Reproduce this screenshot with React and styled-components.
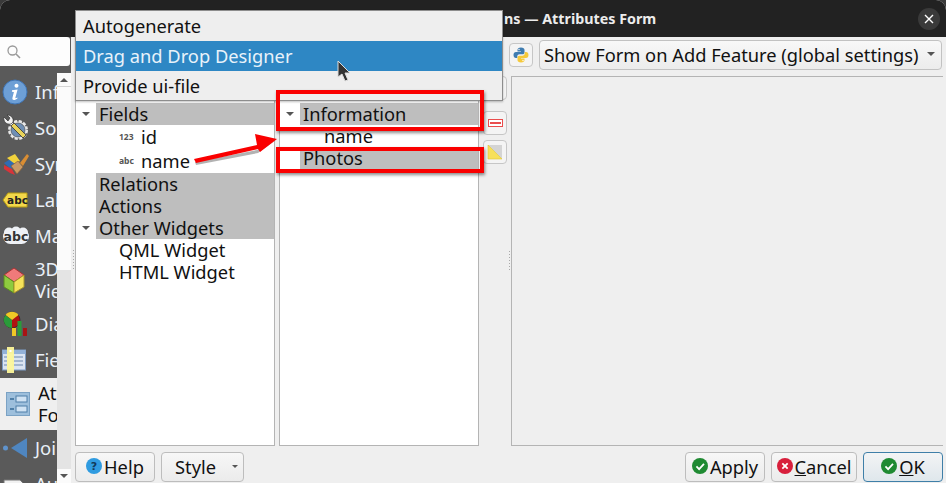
import React from 'react'
import styled, { createGlobalStyle } from 'styled-components'

const GlobalStyle = createGlobalStyle`
  html, body { margin: 0; padding: 0; background: #3a3a3a; }
  body { font-family: "Noto Sans", "DejaVu Sans", sans-serif; }
  * { box-sizing: border-box; }
`

const navItems = [
  { label: 'Information', icon: 'info' },
  { label: 'Source', icon: 'source' },
  { label: 'Symbology', icon: 'symbology' },
  { label: 'Labels', icon: 'labels' },
  { label: 'Masks', icon: 'masks' },
  { label: '3D\nView', icon: 'cube', tall: true },
  { label: 'Diagrams', icon: 'diagrams' },
  { label: 'Fields', icon: 'fields' },
  { label: 'Attributes\nForm', icon: 'form', tall: true, active: true },
  { label: 'Joins', icon: 'joins' },
  { label: 'Auxiliary', icon: 'aux' },
]

function NavIcon({ name }) {
  switch (name) {
    case 'info':
      return (
        <svg width="26" height="26" viewBox="0 0 26 26">
          <circle cx="13" cy="13" r="12" fill="#6d9fd6" stroke="#3f74b4" />
          <path d="M14.5 4.8a2 2 0 1 1-.01 0zM10 11.2l5.6-.6-2.2 8c-.2.8.5.9 1.9-.2l.3.8c-2 2-5.700 2.800-5.200-.2l1.500-6-2-.2z" fill="#fff" />
        </svg>
      )
    case 'source':
      return (
        <svg width="28" height="28" viewBox="0 0 28 28">
          <circle cx="16" cy="16" r="8.500" fill="#d5d9dc" stroke="#e8e8e8" strokeDasharray="3 1.500" strokeWidth="3" />
          <circle cx="16" cy="16" r="7" fill="#6f8fb5" stroke="#444" strokeWidth=".6" />
          <path d="M12 9l12 12-3 3L9 12z" fill="#e8d25a" stroke="#333" strokeWidth=".8" />
          <path d="M2 3c-1 4 2 8 7 7l2-2C12 4 9 1 5 1l3 3-2 3z" fill="#f2f2f2" stroke="#333" strokeWidth=".7" />
        </svg>
      )
    case 'symbology':
      return (
        <svg width="28" height="26" viewBox="0 0 28 26">
          <path d="M2 12l10-6 5 6-8 6z" fill="#2f6cb5" />
          <path d="M5 7l8-4 5 7-5 3z" fill="#f1d23c" />
          <path d="M2 14l8 4 3 6-5-2-6-4z" fill="#d8343a" />
          <path d="M9 15l7-5 5 6-6 7z" fill="#c99a66" stroke="#8a6236" strokeWidth=".7" />
          <path d="M18 12l7-9 2 2-6 10z" fill="#d98d33" />
        </svg>
      )
    case 'labels':
      return (
        <svg width="26" height="16" viewBox="0 0 26 16">
          <path d="M6 1h19v14H6L1 8z" fill="#f3d84a" stroke="#b59a12" />
          <text x="15.500" y="11.500" textAnchor="middle" fontSize="10.500" fontWeight="700" fill="#222" fontFamily="DejaVu Sans">abc</text>
        </svg>
      )
    case 'masks':
      return (
        <svg width="28" height="20" viewBox="0 0 28 20">
          <circle cx="7" cy="6.500" r="5" fill="#eef1f6" />
          <circle cx="14" cy="5.500" r="5" fill="#eef1f6" />
          <circle cx="21" cy="6.500" r="5" fill="#eef1f6" />
          <rect x="1" y="3" width="26" height="15" rx="7.500" fill="#eef1f6" />
          <text x="14" y="14.500" textAnchor="middle" fontSize="12.500" fontWeight="700" fill="#333" fontFamily="DejaVu Sans">abc</text>
        </svg>
      )
    case 'cube':
      return (
        <svg width="24" height="27" viewBox="0 0 24 27">
          <path d="M12 1l10 7-10 7L2 8z" fill="#f07a7a" stroke="#a33" />
          <path d="M2 8l10 7v11L2 20z" fill="#8ecb3f" stroke="#5c8a1e" />
          <path d="M22 8l-10 7v11l10-6z" fill="#f5e25a" stroke="#a8942a" />
        </svg>
      )
    case 'diagrams':
      return (
        <svg width="25" height="26" viewBox="0 0 25 26">
          <circle cx="10" cy="9" r="8" fill="#b01212" stroke="#222" strokeWidth=".6" />
          <path d="M10 9L3.500 4A8 8 0 0 1 16.500 4z" fill="#f0c826" />
          <path d="M10 9L3.500 4A8 8 0 0 0 10 17z" fill="#2a9b3a" />
          <rect x="10" y="17" width="4" height="8" fill="#f0c826" />
          <rect x="15.500" y="10" width="4" height="15" fill="#2a9b3a" />
          <rect x="21" y="17" width="4" height="8" fill="#a81414" />
        </svg>
      )
    case 'fields':
      return (
        <svg width="24" height="26" viewBox="0 0 24 26">
          <rect x="0.500" y="3" width="23" height="20" fill="#dbe5f2" stroke="#7d9cc4" />
          <rect x="0.500" y="3" width="23" height="4" fill="#93b2d8" />
          <path d="M10 10h11M10 14h11M10 18h11M2 10h3M2 14h3M2 18h3" stroke="#6d89ad" />
          <rect x="5" y="0" width="7" height="26" fill="#fdf79a" opacity=".95" />
          <rect x="7.500" y="3" width="2" height="2" fill="#fff" />
        </svg>
      )
    case 'form':
      return (
        <svg width="24" height="24" viewBox="0 0 24 24">
          <rect x="0.500" y="0.500" width="23" height="23" fill="#9dbfdc" stroke="#7ba2c4" />
          <rect x="10" y="4" width="11" height="6" fill="#cfe2f3" stroke="#4f7fa8" />
          <rect x="10" y="14" width="11" height="6" fill="#cfe2f3" stroke="#4f7fa8" />
          <rect x="4" y="6" width="4" height="2" fill="#4f7fa8" />
          <rect x="4" y="16" width="4" height="2" fill="#4f7fa8" />
        </svg>
      )
    case 'joins':
      return (
        <svg width="26" height="22" viewBox="0 0 26 22">
          <circle cx="3.500" cy="11" r="2.500" fill="#5f93cc" />
          <path d="M9 11L25 1v20z" fill="#4f86c0" />
        </svg>
      )
    default:
      return (
        <svg width="24" height="20" viewBox="0 0 24 20">
          <path d="M2 6h16l4 4v10H2z" fill="#f2f2f2" stroke="#777" />
        </svg>
      )
  }
}

const CheckIcon = () => (
  <svg width="16" height="16" viewBox="0 0 18 18">
    <circle cx="9" cy="9" r="9" fill="#1f8a32" />
    <path d="M5 9.500l3 3 5.500-6" fill="none" stroke="#fff" strokeWidth="2" />
  </svg>
)

const CancelIcon = () => (
  <svg width="16" height="16" viewBox="0 0 18 18">
    <circle cx="9" cy="9" r="9" fill="#d81f3c" />
    <path d="M6 6l6 6M12 6l-6 6" stroke="#fff" strokeWidth="2" />
  </svg>
)

const HelpIcon = () => (
  <svg width="16" height="16" viewBox="0 0 18 18">
    <circle cx="9" cy="9" r="9" fill="#2f9be0" />
    <text x="9" y="13.500" textAnchor="middle" fontSize="12.500" fontWeight="700" fill="#123a5c" fontFamily="DejaVu Sans">?</text>
  </svg>
)

const PythonIcon = () => (
  <svg width="16" height="16" viewBox="0 0 16 16">
    <path d="M8 0.500C5.500.5 4.500 1.500 4.500 3v1.500H8V5H3C1.500 5 .5 6.200 .5 8s1 3 2.500 3h1.300V9.500c0-1.300 1-2.200 2.200-2.200h3.200c1 0 1.800-.8 1.800-1.800V3c0-1.500-1.200-2.500-3.500-2.500z" fill="#3f7cb0" />
    <path d="M8 15.500c2.500 0 3.500-1 3.500-2.500v-1.500H8V11h5c1.500 0 2.500-1.200 2.500-3S14.500 5 13 5h-1.300v1.500c0 1.300-1 2.200-2.200 2.200H6.300c-1 0-1.800.8-1.800 1.800V13c0 1.500 1.200 2.500 3.500 2.500z" fill="#f5c93a" />
    <circle cx="6" cy="2.500" r=".7" fill="#fff" />
    <circle cx="10" cy="13.500" r=".7" fill="#fff" />
  </svg>
)

const Page = styled.div`
  position: relative;
  width: 946px;
  height: 483px;
  overflow: hidden;
  display: flex;
  flex-direction: column;
  background: #efefef;
  border-radius: 10px 10px 0 0;
`

const TitleBar = styled.div`
  height: 37px;
  flex: none;
  background: #222222;
  display: flex;
  align-items: center;
  justify-content: space-between;
  padding: 0 6px 0 504px;
`

const Title = styled.div`
  color: #ececec;
  font-size: 14.300px;
  font-weight: 700;
  padding-bottom: 1px;
`

const CloseButton = styled.div`
  width: 22px;
  height: 22px;
  border-radius: 50%;
  background: #3a3a3a;
  display: flex;
  align-items: center;
  justify-content: center;
`

const Body = styled.div`
  flex: 1;
  min-height: 0;
  display: flex;
`

const Sidebar = styled.div`
  width: 71px;
  flex: none;
  background: #5a5a5a;
  display: flex;
  flex-direction: column;
`

const SearchBox = styled.div`
  width: 70px;
  height: 29px;
  flex: none;
  background: #fdfdfd;
  border-radius: 0 3px 3px 0;
  display: flex;
  align-items: center;
  padding-left: 7px;
`

const SidebarBody = styled.div`
  flex: 1;
  min-height: 0;
  display: flex;
  margin-top: 7px;
`

const NavList = styled.div`
  width: 57px;
  flex: none;
  overflow: hidden;
  padding-top: 1px;
`

const NavItem = styled.div`
  width: 57px;
  height: ${p => (p.$tall ? 52 : 36)}px;
  display: flex;
  align-items: center;
  background: ${p => (p.$active ? '#efefef' : 'transparent')};
  color: ${p => (p.$active ? '#111' : '#e9eff6')};
  font-size: 18.500px;
  line-height: 22px;
  white-space: pre;
`

const NavIconBox = styled.div`
  width: ${p => (p.$active ? 38 : 35)}px;
  flex: none;
  padding-left: ${p => (p.$active ? 6 : 2)}px;
  display: flex;
  align-items: center;
`

const ScrollBar = styled.div`
  width: 14px;
  flex: none;
  display: flex;
  flex-direction: column;
  background: #e4e4e4;
`

const ScrollStep = styled.div`
  height: ${p => p.$h}px;
  flex: none;
  display: flex;
  align-items: center;
  justify-content: center;
  background: #fbfbfb;
  border-bottom: ${p => (p.$line ? '1px solid #d5d5d5' : 'none')};
`

const ScrollTrack = styled.div`
  flex: 1;
`

const ArrowUp = styled.div`
  width: 0;
  height: 0;
  border-left: 4px solid transparent;
  border-right: 4px solid transparent;
  border-bottom: 4px solid #555;
`

const ArrowDown = styled.div`
  width: 0;
  height: 0;
  border-left: ${p => p.$s || 4}px solid transparent;
  border-right: ${p => p.$s || 4}px solid transparent;
  border-top: ${p => p.$s || 4}px solid ${p => p.$c || '#555'};
`

const Handle = styled.div`
  width: 4px;
  flex: none;
  display: flex;
  align-items: center;
  justify-content: center;
`

const Grip = styled.div`
  width: 1px;
  height: 20px;
  background: repeating-linear-gradient(#a9a9a9 0 1px, transparent 1px 3px);
`

const Main = styled.div`
  flex: 1;
  min-width: 0;
  display: flex;
  flex-direction: column;
  padding: 0 3px 1px 0;
`

const TopRow = styled.div`
  height: 39px;
  flex: none;
  display: flex;
  justify-content: flex-end;
  align-items: flex-start;
  padding: 3px 1px 0 0;
  gap: 6px;
`

const SmallButton = styled.div`
  width: 24px;
  height: 24px;
  flex: none;
  margin-top: ${p => p.$mt || 0}px;
  background: #f4f4f4;
  border: 1px solid #c6c6c6;
  border-radius: 4px;
  display: flex;
  align-items: center;
  justify-content: center;
`

const Combo = styled.div`
  width: 403px;
  height: 30px;
  background: linear-gradient(#f8f8f8, #ececec);
  border: 1px solid #c2c2c2;
  border-radius: 4px;
  display: flex;
  align-items: center;
  justify-content: space-between;
  padding: 0 6px 2px 4px;
  font-size: 18.300px;
  color: #111;
  white-space: nowrap;
`

const Content = styled.div`
  flex: 1;
  min-height: 0;
  display: flex;
`

const TreePanel = styled.div`
  width: 200px;
  flex: none;
  margin-right: 4px;
  background: #fff;
  border: 1px solid #b4b4b4;
  padding-top: 26px;
  font-size: 18.300px;
  color: #111;
`

const TreeRow = styled.div`
  height: ${p => p.$h || 22}px;
  display: flex;
  align-items: center;
  padding-left: ${p => p.$indent || 0}px;
  white-space: nowrap;
`

const TreeLeaf = styled(TreeRow)`
  padding-bottom: 2px;
`

const Expander = styled.div`
  width: 20px;
  flex: none;
  display: flex;
  justify-content: center;
  padding-right: 1px;
`

const GroupLabel = styled.div`
  flex: 1;
  height: 100%;
  display: flex;
  align-items: center;
  background: #bebebe;
  padding: 0 0 2px 3px;
`

const TypeTag = styled.span`
  width: 22px;
  flex: none;
  font-size: 8.500px;
  font-weight: 700;
  color: #555;
`

const ToolColumn = styled.div`
  width: 24px;
  flex: none;
  display: flex;
  flex-direction: column;
  gap: 5px;
`

const FormPreview = styled.div`
  flex: 1;
  border-top: 1px solid #b4b4b4;
  border-left: 1px solid #b4b4b4;
  border-bottom: 1px solid #b4b4b4;
`

const BottomRow = styled.div`
  height: 30px;
  flex: none;
  margin-top: 6px;
  display: flex;
  gap: 6px;
`

const DialogButton = styled.div`
  width: ${p => p.$w}px;
  flex: none;
  display: flex;
  align-items: center;
  justify-content: center;
  gap: 2px;
  padding-bottom: 2px;
  margin-left: ${p => (p.$push ? 'auto' : '0')};
  background: ${p => (p.$primary ? 'linear-gradient(#f3f4f5, #dfe7ec)' : 'linear-gradient(#f7f7f7, #ebebeb)')};
  border: 1px solid ${p => (p.$primary ? '#3f7fa8' : '#bdbdbd')};
  border-radius: 4px;
  font-size: 18.300px;
  color: #111;
`

const StyleButton = styled(DialogButton)`
  justify-content: flex-start;
  padding-left: 13px;
`

const StyleCaret = styled.span`
  margin-left: 14px;
  display: flex;
`

const Popup = styled.div`
  position: absolute;
  left: 75px;
  top: 10px;
  width: 428px;
  height: 91px;
  background: #eeeeee;
  border: 1px solid #8d8d8d;
  box-shadow: 0 1px 2px rgba(0, 0, 0, 0.25);
  font-size: 18.300px;
  color: #111;
`

const PopupItem = styled.div`
  height: 30px;
  display: flex;
  align-items: center;
  padding: 0 0 2px 7px;
  background: ${p => (p.$selected ? '#2e87c4' : 'transparent')};
  color: ${p => (p.$selected ? '#e8f2fa' : '#111')};
`

const RedBox = styled.div`
  position: absolute;
  left: 276px;
  top: ${p => p.$top}px;
  width: 208px;
  height: ${p => p.$h}px;
  border: 4px solid #fa0000;
  box-shadow: 1px 2px 3px rgba(0, 0, 0, 0.45);
`

const Overlay = styled.svg`
  position: absolute;
  left: 0;
  top: 0;
  pointer-events: none;
`

export default function App() {
  return (
    <>
      <GlobalStyle />
      <Page>
        <TitleBar>
          <Title>ns — Attributes Form</Title>
          <CloseButton>
            <svg width="10" height="10" viewBox="0 0 10 10">
              <path d="M1 1l8 8M9 1L1 9" stroke="#fff" strokeWidth="1.400" />
            </svg>
          </CloseButton>
        </TitleBar>
        <Body>
          <Sidebar>
            <SearchBox>
              <svg width="14" height="14" viewBox="0 0 14 14">
                <circle cx="5.500" cy="5.500" r="4.500" fill="none" stroke="#999" strokeWidth="1.300" />
                <path d="M9 9l4 4" stroke="#999" strokeWidth="1.600" />
              </svg>
            </SearchBox>
            <SidebarBody>
              <NavList>
                {navItems.map(item => (
                  <NavItem key={item.icon} $tall={item.tall} $active={item.active}>
                    <NavIconBox $active={item.active}>
                      <NavIcon name={item.icon} />
                    </NavIconBox>
                    <span>{item.label}</span>
                  </NavItem>
                ))}
              </NavList>
              <ScrollBar>
                <ScrollStep $h={14} $line><ArrowUp /></ScrollStep>
                <ScrollStep $h={183} />
                <ScrollTrack />
                <ScrollStep $h={14}><ArrowDown /></ScrollStep>
              </ScrollBar>
            </SidebarBody>
          </Sidebar>
          <Handle><Grip /></Handle>
          <Main>
            <TopRow>
              <SmallButton $mt={3}><PythonIcon /></SmallButton>
              <Combo>
                <span>Show Form on Add Feature (global settings)</span>
                <ArrowDown />
              </Combo>
            </TopRow>
            <Content>
              <TreePanel>
                <TreeRow>
                  <Expander><ArrowDown /></Expander>
                  <GroupLabel>Fields</GroupLabel>
                </TreeRow>
                <TreeLeaf $h={24} $indent={43}><TypeTag>123</TypeTag>id</TreeLeaf>
                <TreeLeaf $h={24} $indent={43}><TypeTag>abc</TypeTag>name</TreeLeaf>
                <TreeRow>
                  <Expander />
                  <GroupLabel>Relations</GroupLabel>
                </TreeRow>
                <TreeRow>
                  <Expander />
                  <GroupLabel>Actions</GroupLabel>
                </TreeRow>
                <TreeRow>
                  <Expander><ArrowDown /></Expander>
                  <GroupLabel>Other Widgets</GroupLabel>
                </TreeRow>
                <TreeLeaf $indent={43}>QML Widget</TreeLeaf>
                <TreeLeaf $indent={43}>HTML Widget</TreeLeaf>
              </TreePanel>
              <TreePanel>
                <TreeRow>
                  <Expander><ArrowDown /></Expander>
                  <GroupLabel>Information</GroupLabel>
                </TreeRow>
                <TreeLeaf $indent={44}>name</TreeLeaf>
                <TreeRow>
                  <Expander />
                  <GroupLabel>Photos</GroupLabel>
                </TreeRow>
              </TreePanel>
              <ToolColumn>
                <SmallButton>
                  <svg width="14" height="14" viewBox="0 0 14 14">
                    <path d="M5 1h4v4h4v4H9v4H5V9H1V5h4z" fill="#6fbf4a" />
                  </svg>
                </SmallButton>
                <SmallButton $mt={6}>
                  <svg width="15" height="8" viewBox="0 0 15 8">
                    <rect x="0.500" y="0.500" width="14" height="7" fill="#fff" stroke="#ea4d4d" />
                    <rect x="2" y="3" width="11" height="2" fill="#ea4d4d" />
                  </svg>
                </SmallButton>
                <SmallButton>
                  <svg width="16" height="16" viewBox="0 0 16 16">
                    <path d="M1 1h14v14z" fill="#d4d4d4" />
                    <path d="M1 1l14 14H1z" fill="#f7e05a" stroke="#e0c636" strokeWidth=".6" />
                  </svg>
                </SmallButton>
              </ToolColumn>
              <Handle><Grip /></Handle>
              <FormPreview />
            </Content>
            <BottomRow>
              <DialogButton $w={80}><HelpIcon />Help</DialogButton>
              <StyleButton $w={83}>
                Style
                <StyleCaret><ArrowDown $s={3} /></StyleCaret>
              </StyleButton>
              <DialogButton $w={80} $push><CheckIcon />Apply</DialogButton>
              <DialogButton $w={86}><CancelIcon /><span><u>C</u>ancel</span></DialogButton>
              <DialogButton $w={80} $primary><CheckIcon /><span><u>O</u>K</span></DialogButton>
            </BottomRow>
          </Main>
        </Body>
        <Popup>
          <PopupItem>Autogenerate</PopupItem>
          <PopupItem $selected>Drag and Drop Designer</PopupItem>
          <PopupItem>Provide ui-file</PopupItem>
        </Popup>
        <RedBox $top={90} $h={41} />
        <RedBox $top={147} $h={26} />
        <Overlay width="946" height="483" viewBox="0 0 946 483">
          <path d="M195 162L257 150L276 140L258 153L196 165z" fill="rgba(0,0,0,0.3)" />
          <path d="M194 159L257 145L255 134L277 139L260 152L258 149L196 163z" fill="#fa0000" />
          <path d="M338 61v16l4-3 3 7 3-1-3-7h5z" fill="#333" stroke="#ddd" strokeWidth="1" />
        </Overlay>
      </Page>
    </>
  )
}
